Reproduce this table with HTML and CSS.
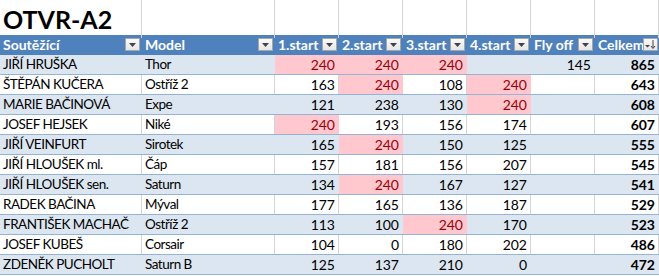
FILE: index.html
```html
<!DOCTYPE html>
<html lang="cs">
<head>
<meta charset="utf-8">
<link rel="stylesheet" href="styles.css">
</head>
<body>
<div class="sheet">
  <div class="row title-row">
    <div class="cell title">OTVR-A2</div>
    <div class="cell"></div><div class="cell"></div><div class="cell"></div><div class="cell"></div><div class="cell"></div><div class="cell"></div><div class="cell"></div>
  </div>
  <div class="row head">
    <div class="cell">Soutěžící<span class="dd"><svg width="7" height="4" viewBox="0 0 7 4"><path d="M0 0h7L3.5 4z" fill="#444"/></svg></span></div>
    <div class="cell">Model<span class="dd"><svg width="7" height="4" viewBox="0 0 7 4"><path d="M0 0h7L3.5 4z" fill="#444"/></svg></span></div>
    <div class="cell">1.start<span class="dd"><svg width="7" height="4" viewBox="0 0 7 4"><path d="M0 0h7L3.5 4z" fill="#444"/></svg></span></div>
    <div class="cell">2.start<span class="dd"><svg width="7" height="4" viewBox="0 0 7 4"><path d="M0 0h7L3.5 4z" fill="#444"/></svg></span></div>
    <div class="cell">3.start<span class="dd"><svg width="7" height="4" viewBox="0 0 7 4"><path d="M0 0h7L3.5 4z" fill="#444"/></svg></span></div>
    <div class="cell">4.start<span class="dd"><svg width="7" height="4" viewBox="0 0 7 4"><path d="M0 0h7L3.5 4z" fill="#444"/></svg></span></div>
    <div class="cell">Fly off<span class="dd"><svg width="7" height="4" viewBox="0 0 7 4"><path d="M0 0h7L3.5 4z" fill="#444"/></svg></span></div>
    <div class="cell">Celkem<span class="dd"><svg width="11" height="11" viewBox="0 0 11 11"><path d="M0 6h5L2.5 8.5z" fill="#444"/><path d="M8 1v8M6 7l2 2.5L10 7" stroke="#444" stroke-width="1" fill="none"/></svg></span></div>
  </div>
  <div class="row band">
    <div class="cell txt">JIŘÍ HRUŠKA</div><div class="cell txt">Thor</div>
    <div class="cell num bad">240</div><div class="cell num bad">240</div><div class="cell num bad">240</div><div class="cell num"></div><div class="cell num">145</div><div class="cell num tot">865</div>
  </div>
  <div class="row">
    <div class="cell txt">ŠTĚPÁN KUČERA</div><div class="cell txt">Ostříž 2</div>
    <div class="cell num">163</div><div class="cell num bad">240</div><div class="cell num">108</div><div class="cell num bad">240</div><div class="cell num"></div><div class="cell num tot">643</div>
  </div>
  <div class="row band">
    <div class="cell txt">MARIE BAČINOVÁ</div><div class="cell txt">Expe</div>
    <div class="cell num">121</div><div class="cell num">238</div><div class="cell num">130</div><div class="cell num bad">240</div><div class="cell num"></div><div class="cell num tot">608</div>
  </div>
  <div class="row">
    <div class="cell txt">JOSEF HEJSEK</div><div class="cell txt">Niké</div>
    <div class="cell num bad">240</div><div class="cell num">193</div><div class="cell num">156</div><div class="cell num">174</div><div class="cell num"></div><div class="cell num tot">607</div>
  </div>
  <div class="row band">
    <div class="cell txt">JIŘÍ VEINFURT</div><div class="cell txt">Sirotek</div>
    <div class="cell num">165</div><div class="cell num bad">240</div><div class="cell num">150</div><div class="cell num">125</div><div class="cell num"></div><div class="cell num tot">555</div>
  </div>
  <div class="row">
    <div class="cell txt">JIŘÍ HLOUŠEK ml.</div><div class="cell txt">Čáp</div>
    <div class="cell num">157</div><div class="cell num">181</div><div class="cell num">156</div><div class="cell num">207</div><div class="cell num"></div><div class="cell num tot">545</div>
  </div>
  <div class="row band">
    <div class="cell txt">JIŘÍ HLOUŠEK sen.</div><div class="cell txt">Saturn</div>
    <div class="cell num">134</div><div class="cell num bad">240</div><div class="cell num">167</div><div class="cell num">127</div><div class="cell num"></div><div class="cell num tot">541</div>
  </div>
  <div class="row">
    <div class="cell txt">RADEK BAČINA</div><div class="cell txt">Mýval</div>
    <div class="cell num">177</div><div class="cell num">165</div><div class="cell num">136</div><div class="cell num">187</div><div class="cell num"></div><div class="cell num tot">529</div>
  </div>
  <div class="row band">
    <div class="cell txt">FRANTIŠEK MACHAČ</div><div class="cell txt">Ostříž 2</div>
    <div class="cell num">113</div><div class="cell num">100</div><div class="cell num bad">240</div><div class="cell num">170</div><div class="cell num"></div><div class="cell num tot">523</div>
  </div>
  <div class="row">
    <div class="cell txt">JOSEF KUBEŠ</div><div class="cell txt">Corsair</div>
    <div class="cell num">104</div><div class="cell num">0</div><div class="cell num">180</div><div class="cell num">202</div><div class="cell num"></div><div class="cell num tot">486</div>
  </div>
  <div class="row band">
    <div class="cell txt">ZDENĚK PUCHOLT</div><div class="cell txt">Saturn B</div>
    <div class="cell num">125</div><div class="cell num">137</div><div class="cell num">210</div><div class="cell num">0</div><div class="cell num"></div><div class="cell num tot">472</div>
  </div>
</div>
</body>
</html>
```

FILE: styles.css
```css
html, body {
  margin: 0;
  padding: 0;
  background: #ffffff;
}
body {
  font-family: Lato, "Open Sans", sans-serif;
  font-size: 14px;
  color: #000;
  overflow: hidden;
}
.sheet {
  width: 659px;
}
.row {
  display: grid;
  grid-template-columns: 142px 133px repeat(6, 64px);
  height: 20px;
  box-sizing: border-box;
  border-bottom: 1px solid #95b3d7;
}
.cell {
  box-sizing: border-box;
  border-right: 1px solid #d4d4d4;
  padding: 0 3px;
  line-height: 19px;
  white-space: nowrap;
  overflow: hidden;
  position: relative;
}
.txt {
  font-size: 13.5px;
  letter-spacing: -0.5px;
}
.title-row {
  height: 35px;
  border-bottom: none;
}
.title {
  font-size: 25px;
  font-weight: 700;
  line-height: 38px;
  padding-left: 3px;
  overflow: visible;
}
.head {
  background: #4f81bd;
  color: #ffffff;
  font-weight: 700;
  border-bottom: 1px solid #4f81bd;
}
.head .cell {
  border-right: none;
}
.dd {
  position: absolute;
  right: 2px;
  top: 3px;
  width: 15px;
  height: 13px;
  box-sizing: border-box;
  border: 1px solid #a6a6a6;
  background: linear-gradient(#fafafa, #e6e6e6);
  display: flex;
  align-items: center;
  justify-content: center;
}
.head .cell:last-child .dd {
  right: 1px;
}
.band {
  background: #dce6f1;
}
.band .cell {
  border-right-color: #dce6f1;
}
.num {
  text-align: right;
}
.tot {
  font-weight: 700;
}
.cell.bad {
  background: #ffc7ce;
  color: #9c0006;
  border-right-color: #ffc7ce;
}
```
